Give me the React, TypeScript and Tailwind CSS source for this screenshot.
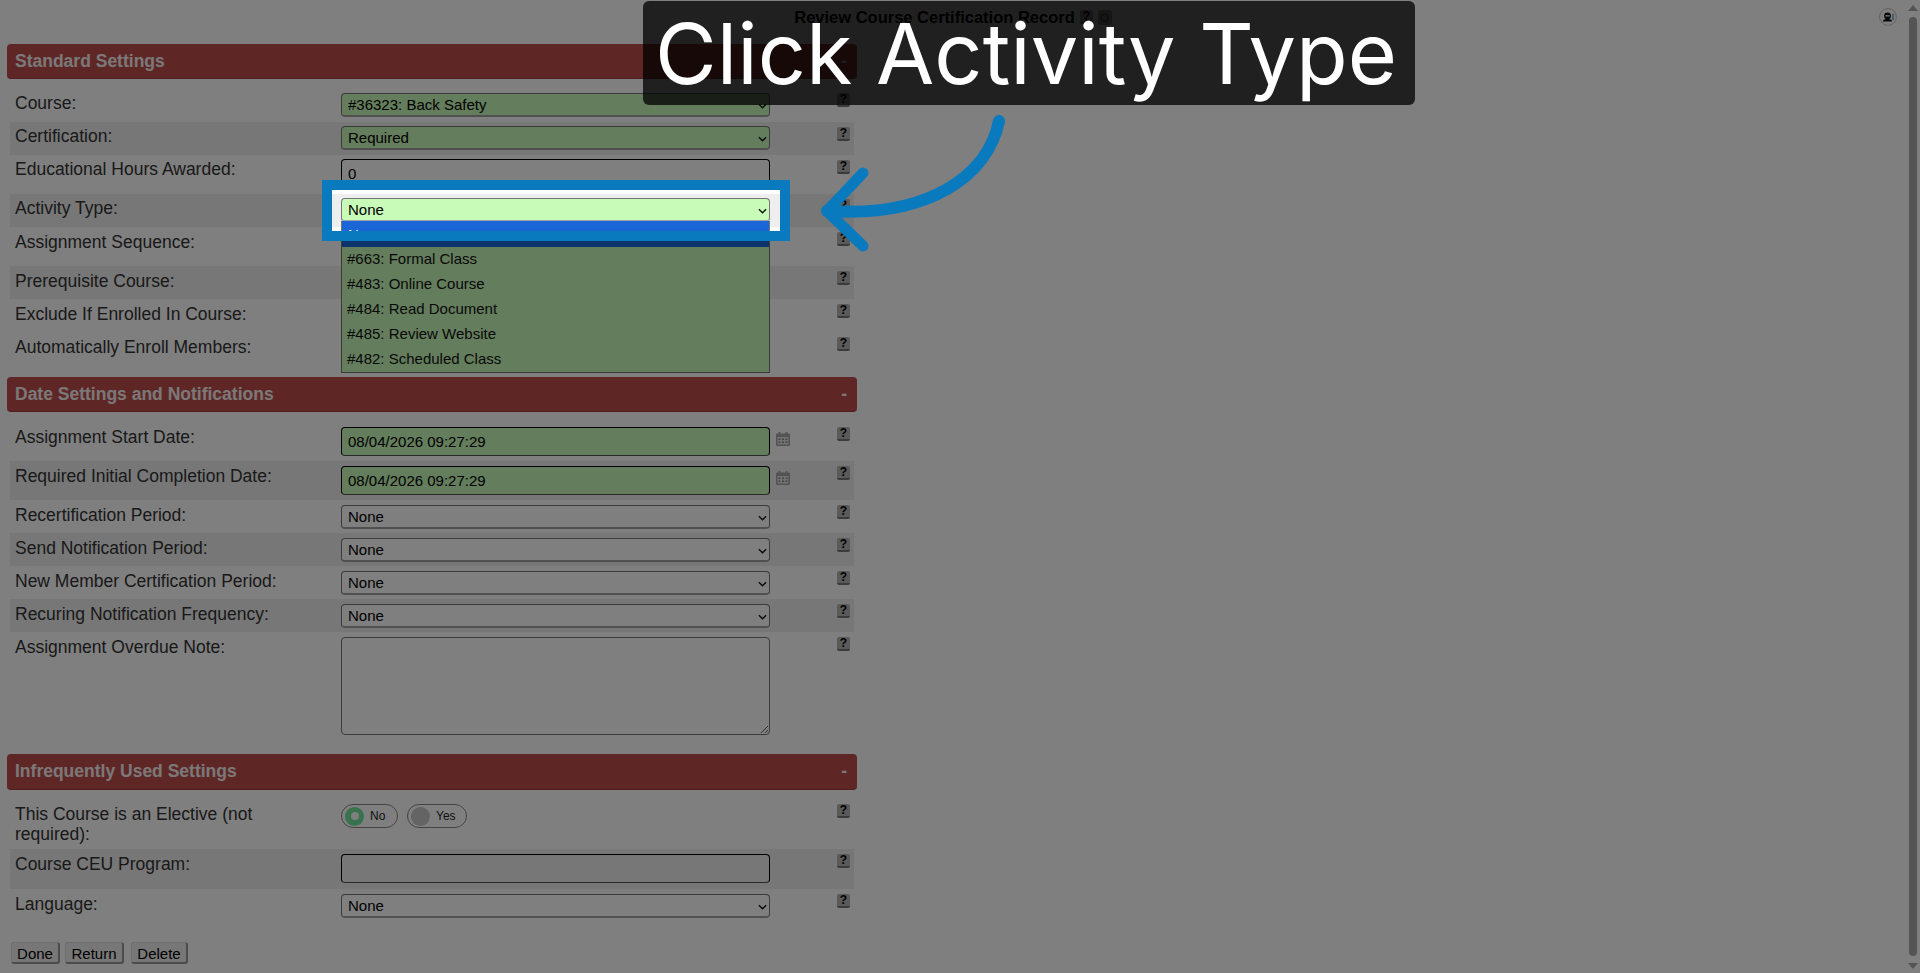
import type { ReactNode } from "react";

const inputClass =
  "block w-[429px] h-[29px] pl-[6px] text-[15px] text-black border border-black rounded-[4px] border-b-[#555]";
const selectClass =
  "block w-[429px] h-[24px] pl-[6px] text-[15px] text-black appearance-none border border-[#767676] border-b-2 border-b-[#a0a0a0] rounded-[4px]";

function HelpIcon() {
  return (
    <span className="flex items-center justify-center w-[13px] h-[14px] rounded-[2px] bg-[#b4b4b4] border-b-2 border-[#777] text-[12px] leading-none font-bold text-black">
      ?
    </span>
  );
}

function CalendarIcon() {
  return (
    <svg viewBox="0 0 16 16" className="w-[16px] h-[16px] ml-[5px] mt-[4px]">
      <rect x="1" y="2.5" width="14" height="12.5" rx="1" fill="#a6a6a6" />
      <rect x="3.5" y="1" width="2" height="3" fill="#a6a6a6" />
      <rect x="10.5" y="1" width="2" height="3" fill="#a6a6a6" />
      <rect x="2.5" y="6" width="11" height="7.5" fill="#e4e4e4" />
      <path d="M3.5 7.5h2v1.5h-2zM7 7.5h2v1.5h-2zM10.5 7.5h2v1.5h-2zM3.5 10.5h2v1.5h-2zM7 10.5h2v1.5h-2zM10.5 10.5h2v1.5h-2z" fill="#8c8c8c" />
    </svg>
  );
}

function Row({ label, band, tight, h, children, after }: { label: string; band?: boolean; tight?: boolean; h: string; children?: ReactNode; after?: ReactNode }) {
  return (
    <div className={`flex items-start mx-[3px] pr-[4px] ${tight ? "pt-[4px]" : "pt-[5px]"} ${h} ${band ? "bg-[#eee]" : ""}`}>
      <div className="w-[331px] pl-[5px] pr-[60px] leading-[20px] text-[17.5px] text-[#333]">{label}</div>
      <div className="relative">{children}</div>
      {after}
      <div className={`ml-auto ${tight ? "mt-[1px]" : ""}`}>
        <HelpIcon />
      </div>
    </div>
  );
}

function SectionBar({ title, h }: { title: string; h: string }) {
  return (
    <div className={`flex items-center justify-between pl-[8px] pr-[10px] rounded-[4px] bg-[#bf4c4c] border-b border-[#a03c3c] text-[17.5px] font-bold text-[#f6f0f0] ${h}`}>
      <span>{title}</span>
      <span>-</span>
    </div>
  );
}

function Select({ value, green }: { value: string; green?: boolean }) {
  return (
    <div className="relative">
      <select defaultValue={value} className={`${selectClass} ${green ? "bg-[#c8fab8]" : "bg-white"}`}>
        <option>{value}</option>
      </select>
      <svg viewBox="0 0 10 6" className="absolute right-[3px] top-[10px] w-[9px] h-[6px] pointer-events-none">
        <path d="M1 1l4 4 4-4" fill="none" stroke="#111" strokeWidth="1.5" />
      </svg>
    </div>
  );
}

function Toggle({ label, checked, w }: { label: string; checked?: boolean; w: string }) {
  return (
    <span className={`flex items-center h-[24px] rounded-full border border-[#888] pl-[3px] text-[12px] text-[#222] ${w}`}>
      <span className={`flex items-center justify-center w-[19px] h-[19px] rounded-full mr-[6px] ${checked ? "bg-[#70e49c]" : "bg-[#c8c8c8]"}`}>
        {checked && <span className="w-[8px] h-[8px] rounded-full bg-white" />}
      </span>
      {label}
    </span>
  );
}

const activityOptions = ["#663: Formal Class", "#483: Online Course", "#484: Read Document", "#485: Review Website", "#482: Scheduled Class"];

export default function App() {
  return (
    <div className="relative flex h-screen overflow-hidden bg-white font-['Liberation_Sans',Arial,sans-serif]">
      <div className="flex-1 min-w-0">
        {/* page title */}
        <div className="flex items-center h-[34px] mb-[10px]">
          <div className="flex-1" />
          <div className="flex items-center ml-[9px] text-[16.5px] font-bold text-black">
            Review Course Certification Record
            <span className="ml-[5px]">
              <HelpIcon />
            </span>
            <span className="ml-[5px] flex items-center justify-center w-[14px] h-[15px] rounded-[2px] bg-[#b4b4b4]">
              <span className="w-[9px] h-[9px] rounded-full border-2 border-[#6b8a3a]" />
            </span>
          </div>
          <div className="flex flex-1 justify-end pr-[8px]">
            <svg viewBox="0 0 18 18" className="w-[18px] h-[18px]">
              <circle cx="9" cy="9" r="8.4" fill="none" stroke="#bbb" strokeWidth="0.9" />
              <circle cx="8.5" cy="8" r="3.4" fill="#111" />
              <path d="M4 12.5c1-2 8-2 9 0v1H4z" fill="#111" />
              <rect x="6.4" y="7" width="4.2" height="1.6" fill="#ccc" />
              <path d="M14 6v6" stroke="#2a90c8" strokeWidth="1.2" />
            </svg>
          </div>
        </div>

        <div className="ml-[7px] w-[850px]">
          <SectionBar title="Standard Settings" h="h-[35px]" />
          <div className="pt-[9px] pb-[12px]">
            <Row label="Course:" h="h-[34px]">
              <Select value="#36323: Back Safety" green />
            </Row>
            <Row label="Certification:" band tight h="h-[33px]">
              <Select value="Required" green />
            </Row>
            <Row label="Educational Hours Awarded:" tight h="h-[39px]">
              <input defaultValue="0" className={inputClass} />
            </Row>
            <Row label="Activity Type:" band tight h="h-[33px]">
              <Select value="None" green />
              <div className="absolute left-0 top-[23px] z-10 w-[429px] bg-[#c8fab8] border border-t-0 border-[#777] text-[15px] text-[#111]">
                <div className="h-[26px] pl-[6px] pt-[3px] bg-[#1a66d6] text-white">None</div>
                {activityOptions.map((option) => (
                  <div key={option} className="flex items-center h-[25px] pl-[5px]">
                    {option}
                  </div>
                ))}
              </div>
            </Row>
            <Row label="Assignment Sequence:" h="h-[39px]" />
            <Row label="Prerequisite Course:" band h="h-[33px]" />
            <Row label="Exclude If Enrolled In Course:" h="h-[33px]" />
            <Row label="Automatically Enroll Members:" h="h-[33px]" />
          </div>

          <SectionBar title="Date Settings and Notifications" h="h-[35px]" />
          <div className="pt-[10px] pb-[11px]">
            <Row label="Assignment Start Date:" h="h-[39px]" after={<CalendarIcon />}>
              <input defaultValue="08/04/2026 09:27:29" className={`${inputClass} bg-[#c8fab8]`} />
            </Row>
            <Row label="Required Initial Completion Date:" band h="h-[39px]" after={<CalendarIcon />}>
              <input defaultValue="08/04/2026 09:27:29" className={`${inputClass} bg-[#c8fab8]`} />
            </Row>
            <Row label="Recertification Period:" h="h-[33px]">
              <Select value="None" />
            </Row>
            <Row label="Send Notification Period:" band h="h-[33px]">
              <Select value="None" />
            </Row>
            <Row label="New Member Certification Period:" h="h-[33px]">
              <Select value="None" />
            </Row>
            <Row label="Recuring Notification Frequency:" band h="h-[33px]">
              <Select value="None" />
            </Row>
            <Row label="Assignment Overdue Note:" h="h-[111px]">
              <textarea className="block w-[429px] h-[98px] bg-white border border-[#767676] rounded-[4px]" />
            </Row>
          </div>

          <SectionBar title="Infrequently Used Settings" h="h-[36px]" />
          <div className="pt-[9px]">
            <Row label="This Course is an Elective (not required):" h="h-[50px]">
              <div className="flex gap-[9px]">
                <Toggle label="No" checked w="w-[57px]" />
                <Toggle label="Yes" w="w-[60px]" />
              </div>
            </Row>
            <Row label="Course CEU Program:" band h="h-[40px]">
              <input className={inputClass} />
            </Row>
            <Row label="Language:" h="h-[33px]">
              <Select value="None" />
            </Row>
          </div>
        </div>

        <div className="flex mt-[20px] ml-[11px] text-[15px] text-black">
          <button className="w-[49px] h-[22px] bg-[#efefef] rounded-[3px] border border-[#ddd] border-b-2 border-r-2 border-b-[#999] border-r-[#999]">Done</button>
          <button className="w-[59px] h-[22px] ml-[5px] bg-[#efefef] rounded-[3px] border border-[#ddd] border-b-2 border-r-2 border-b-[#999] border-r-[#999]">Return</button>
          <button className="w-[57px] h-[22px] ml-[7px] bg-[#efefef] rounded-[3px] border border-[#ddd] border-b-2 border-r-2 border-b-[#999] border-r-[#999]">Delete</button>
        </div>
      </div>

      {/* scrollbar */}
      <div className="flex flex-col items-center w-[15px] bg-white pt-[5px] pb-[4px]">
        <span className="w-0 h-0 border-x-[5px] border-x-transparent border-b-[6px] border-b-[#a8a8a8]" />
        <span className="w-[8px] flex-1 mt-[6px] mb-[7px] rounded-full bg-[#a8a8a8]" />
        <span className="w-0 h-0 border-x-[5px] border-x-transparent border-t-[6px] border-t-[#a8a8a8]" />
      </div>

      {/* dimmed screen with the highlighted field */}
      <div className="absolute left-[322px] top-[180px] z-20 w-[468px] h-[61px] border-[10px] border-[#0a7abf] shadow-[0_0_0_3000px_rgba(0,0,0,0.5)]" />

      <svg viewBox="815 110 200 150" className="absolute left-[815px] top-[110px] z-30 w-[200px] h-[150px]">
        <path d="M999 121C988 175 930 218 827 211" fill="none" stroke="#0a7abf" strokeWidth="12" strokeLinecap="round" />
        <path d="M863 173L827 211L863 246" fill="none" stroke="#0a7abf" strokeWidth="11" strokeLinecap="round" strokeLinejoin="round" />
      </svg>

      <div className="absolute left-[643px] top-[1px] z-30 flex items-center justify-center w-[772px] h-[104px] pr-[6px] rounded-[6px] bg-black/75 font-['Inter',sans-serif] text-[84.5px] leading-none whitespace-nowrap text-white">
        Click Activity Type
      </div>
    </div>
  );
}
